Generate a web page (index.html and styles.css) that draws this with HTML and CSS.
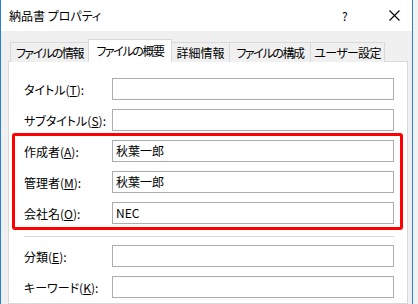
FILE: index.html
```html
<!DOCTYPE html>
<html lang="ja">
<head>
<meta charset="utf-8">
<title>納品書 プロパティ</title>
<link rel="stylesheet" href="styles.css">
</head>
<body>
<div class="window">
  <div class="titlebar">
    <span class="title">納品書 プロパティ</span>
    <span class="help">?</span>
    <span class="close"><svg width="11" height="11" viewBox="0 0 11 11"><path d="M0.5 0.5 L10.5 10.5 M10.5 0.5 L0.5 10.5" stroke="#000" stroke-width="1.1" fill="none"/></svg></span>
  </div>
  <div class="client">
    <div class="tabs">
      <div class="tab tab-info">ファイルの情報</div>
      <div class="tab tab-summary active">ファイルの概要</div>
      <div class="tab tab-detail">詳細情報</div>
      <div class="tab tab-struct">ファイルの構成</div>
      <div class="tab tab-user">ユーザー設定</div>
    </div>
    <div class="panel">
      <div class="row"><label class="lbl">タイトル(<u>T</u>):</label><div class="field"></div></div>
      <div class="row"><label class="lbl">サブタイトル(<u>S</u>):</label><div class="field"></div></div>
      <div class="highlight">
        <div class="row"><label class="lbl">作成者(<u>A</u>):</label><div class="field">秋葉一郎</div></div>
        <div class="row"><label class="lbl">管理者(<u>M</u>):</label><div class="field">秋葉一郎</div></div>
        <div class="row"><label class="lbl">会社名(<u>O</u>):</label><div class="field">NEC</div></div>
      </div>
      <div class="sep"></div>
      <div class="row"><label class="lbl">分類(<u>E</u>):</label><div class="field"></div></div>
      <div class="row"><label class="lbl">キーワード(<u>K</u>):</label><div class="field"></div></div>
    </div>
  </div>
</div>
</body>
</html>
```
FILE: styles.css
```css
html, body {
  margin: 0;
  padding: 0;
}
body {
  width: 418px;
  height: 304px;
  overflow: hidden;
  background: #f2f2f2;
  font-family: "Noto Sans CJK JP", "Noto Sans", sans-serif;
  font-size: 12px;
  font-feature-settings: "palt";
  color: #000;
}
.window {
  width: 411px;
  height: 304px;
  border-left: 1px solid #2b7fd6;
  border-right: 1px solid #2b7fd6;
  background: #f0f0f0;
  display: flex;
  flex-direction: column;
}
.titlebar {
  height: 31px;
  background: #fff;
  display: flex;
  align-items: center;
  padding-left: 8px;
  flex-shrink: 0;
}
.title {
  flex: 1;
  line-height: 16px;
}
.help {
  width: 12px;
  margin-right: 35px;
  line-height: 16px;
}
.close {
  width: 11px;
  height: 11px;
  margin-right: 12px;
  display: flex;
}
.client {
  padding: 8px 0 0 7px;
  flex: 1;
  display: flex;
  flex-direction: column;
}
.tabs {
  display: flex;
  align-items: flex-end;
  padding-left: 2px;
  margin-bottom: -1px;
  position: relative;
  z-index: 1;
}
.tab {
  box-sizing: border-box;
  height: 20px;
  line-height: 19px;
  border: 1px solid #d9d9d9;
  border-bottom: none;
  background: #f0f0f0;
  margin-left: -1px;
  white-space: nowrap;
  text-align: center;
  letter-spacing: -1.4px;
  flex-shrink: 0;
}
.tab:first-child {
  margin-left: 0;
}
.tab-info { width: 79px; }
.tab-summary { width: 84px; }
.tab-detail { width: 59px; letter-spacing: 0; }
.tab-struct { width: 82px; }
.tab-user { width: 75px; letter-spacing: -0.7px; }
.tab.active {
  height: 23px;
  line-height: 22px;
  background: #fff;
}
.panel {
  width: 400px;
  box-sizing: border-box;
  flex: 1;
  background: #fff;
  border: 1px solid #d9d9d9;
  padding: 16px 13px 0 15px;
  display: flex;
  flex-direction: column;
  gap: 9px;
}
.row {
  display: flex;
  align-items: center;
  height: 22px;
}
.lbl {
  width: 88px;
  flex-shrink: 0;
  white-space: nowrap;
}
.lbl u {
  text-underline-offset: 1px;
}
.field {
  width: 282px;
  height: 22px;
  box-sizing: border-box;
  border: 1px solid #acacac;
  padding-left: 3px;
  line-height: 20px;
}
.highlight {
  margin: -7px -9px 0 -12px;
  border: 3px solid #ff0000;
  border-radius: 3px;
  padding: 4px 6px 3px 9px;
  display: flex;
  flex-direction: column;
  gap: 9px;
}
.sep {
  height: 1px;
  background: #dadada;
  margin: -3px 0 -1px 0;
}
```
